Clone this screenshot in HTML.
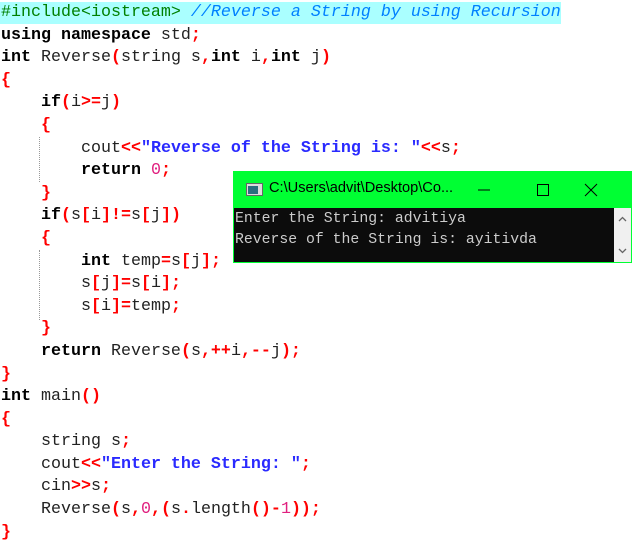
<!DOCTYPE html><html><head><style>
body{margin:0;width:642px;height:543px;background:#fff;overflow:hidden;position:relative}
pre{margin:0;font-family:"Liberation Mono",monospace;font-size:16.67px;line-height:22.6px;color:#222;position:absolute;top:2px;left:1px}
.k{font-weight:bold;color:#000}.o{color:#f00;font-weight:bold}.s{color:#2a2aff;font-weight:bold}
.n{color:#e0207f}.p{color:#008000}.c{color:#0080ff;font-style:italic}
.hl{position:absolute;left:0;top:2px;width:561px;height:22px;background:#aff}
.g{position:absolute;left:39px;width:0;border-left:1px dotted #999}
.win{position:absolute;left:233px;top:171px;width:399px;height:92px;background:#00ff33}
.con{position:absolute;left:1px;top:37px;width:380px;height:54px;background:#0c0c0c;color:#ccc;font-family:"Liberation Mono",monospace;font-size:14.8px;line-height:21px;padding-left:1px;padding-top:1px;box-sizing:border-box}
.sb{position:absolute;left:381px;top:37px;width:17px;height:54px;background:#f0f0f0}
.t{position:absolute;left:36px;top:9px;font-family:"Liberation Sans",sans-serif;font-size:14.6px;color:#000}
</style></head><body>
<div class="hl"></div>
<div class="g" style="top:137px;height:45px"></div>
<div class="g" style="top:250px;height:70px"></div>
<pre><span class="p">#include&lt;iostream&gt;</span> <span class="c">//Reverse a String by using Recursion</span>
<span class="k">using namespace</span> std<span class="o">;</span>
<span class="k">int</span> Reverse<span class="o">(</span>string s<span class="o">,</span><span class="k">int</span> i<span class="o">,</span><span class="k">int</span> j<span class="o">)</span>
<span class="o">{</span>
    <span class="k">if</span><span class="o">(</span>i<span class="o">&gt;=</span>j<span class="o">)</span>
    <span class="o">{</span>
        cout<span class="o">&lt;&lt;</span><span class="s">"Reverse of the String is: "</span><span class="o">&lt;&lt;</span>s<span class="o">;</span>
        <span class="k">return</span> <span class="n">0</span><span class="o">;</span>
    <span class="o">}</span>
    <span class="k">if</span><span class="o">(</span>s<span class="o">[</span>i<span class="o">]!=</span>s<span class="o">[</span>j<span class="o">])</span>
    <span class="o">{</span>
        <span class="k">int</span> temp<span class="o">=</span>s<span class="o">[</span>j<span class="o">];</span>
        s<span class="o">[</span>j<span class="o">]=</span>s<span class="o">[</span>i<span class="o">];</span>
        s<span class="o">[</span>i<span class="o">]=</span>temp<span class="o">;</span>
    <span class="o">}</span>
    <span class="k">return</span> Reverse<span class="o">(</span>s<span class="o">,++</span>i<span class="o">,--</span>j<span class="o">);</span>
<span class="o">}</span>
<span class="k">int</span> main<span class="o">()</span>
<span class="o">{</span>
    string s<span class="o">;</span>
    cout<span class="o">&lt;&lt;</span><span class="s">"Enter the String: "</span><span class="o">;</span>
    cin<span class="o">&gt;&gt;</span>s<span class="o">;</span>
    Reverse<span class="o">(</span>s<span class="o">,</span><span class="n">0</span><span class="o">,(</span>s<span class="o">.</span>length<span class="o">()-</span><span class="n">1</span><span class="o">));</span>
<span class="o">}</span></pre>
<div class="win">
<svg style="position:absolute;left:13px;top:12px" width="18" height="14"><rect x="0.5" y="0.5" width="16" height="12" fill="#ddd" stroke="#666"/><rect x="2" y="3" width="10" height="8" fill="#2a6f7f"/></svg>
<div class="t">C:\Users\advit\Desktop\Co...</div>
<svg style="position:absolute;left:240px;top:10px" width="130" height="18"><line x1="5" y1="9" x2="17" y2="9" stroke="#000"/><rect x="64.5" y="3.5" width="11" height="11" fill="none" stroke="#000"/><path d="M112 3 L124 15 M124 3 L112 15" stroke="#000"/></svg>
<div class="con">Enter the String: advitiya<br>Reverse of the String is: ayitivda</div>
<div class="sb"><svg width="17" height="54"><path d="M5 13 L8.5 9.5 L12 13 M5 41 L8.5 44.5 L12 41" fill="none" stroke="#666" stroke-width="1.3"/></svg></div>
</div>
</body></html>
